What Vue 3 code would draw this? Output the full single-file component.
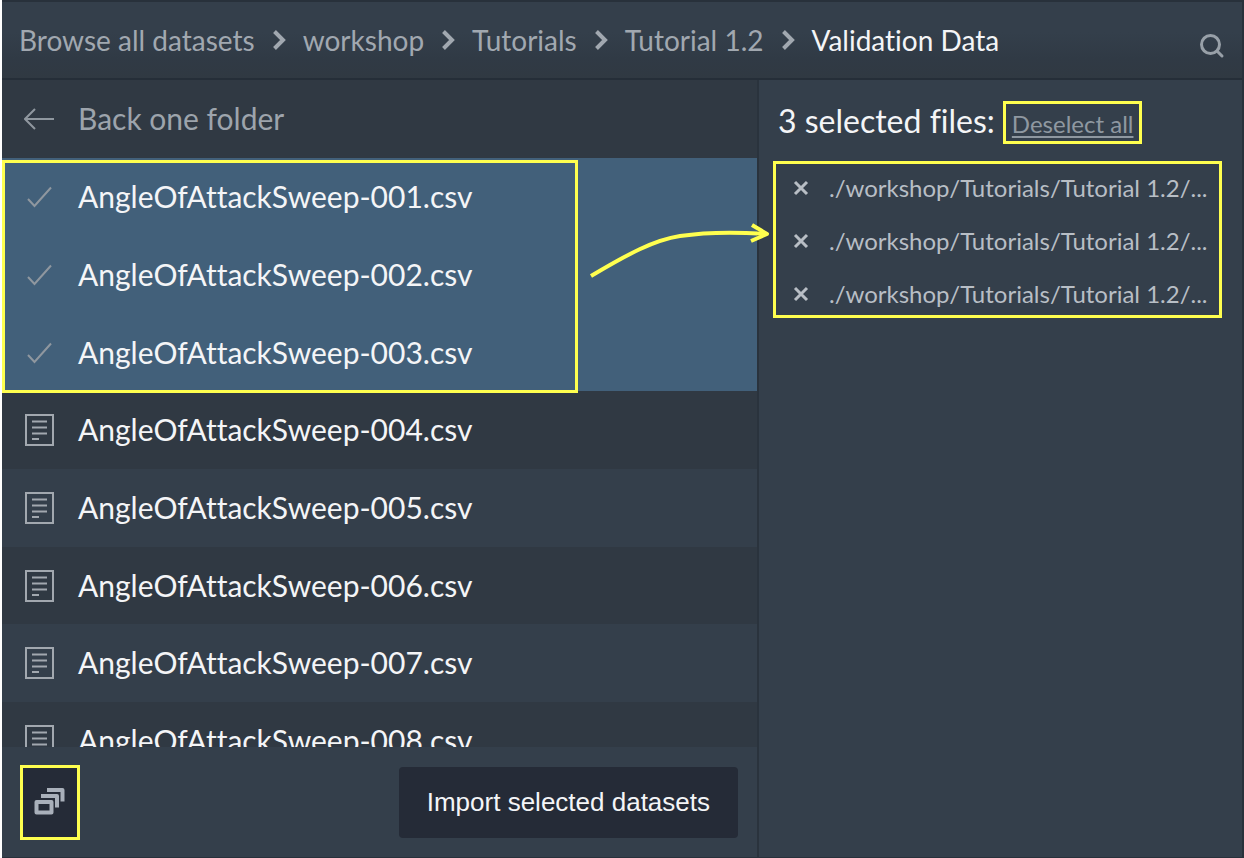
<script setup>
import { ref, computed } from 'vue'

const crumbs = ['Browse all datasets', 'workshop', 'Tutorials', 'Tutorial 1.2', 'Validation Data']
const files = ref(
  ['001', '002', '003', '004', '005', '006', '007', '008'].map((n, i) => ({
    name: `AngleOfAttackSweep-${n}.csv`,
    selected: i < 3,
  }))
)
const selected = computed(() => files.value.filter((f) => f.selected))
const deselectAll = () => files.value.forEach((f) => (f.selected = false))
</script>

<template>
  <div class="browser">
    <header class="header">
      <nav class="crumbs" aria-label="Breadcrumb">
        <template v-for="(crumb, i) in crumbs" :key="crumb">
          <svg v-if="i" class="chevron" viewBox="0 0 14 22" aria-hidden="true">
            <path d="M2.500 2.500 L11 11 L2.500 19.500" />
          </svg>
          <a href="#" class="crumb" :class="{ current: i === crumbs.length - 1 }">{{ crumb }}</a>
        </template>
      </nav>
      <button class="search" type="button" aria-label="Search">
        <svg viewBox="0 0 26 26" aria-hidden="true">
          <circle cx="11.500" cy="11.500" r="9" />
          <path d="M18.500 18.500 L23 23" />
        </svg>
      </button>
    </header>

    <main class="main">
      <section class="files">
        <button class="row back" type="button">
          <svg class="icon" viewBox="0 0 32 32" aria-hidden="true">
            <path class="thin" d="M30 16 H1 M11 6 L1 16 L11 26" />
          </svg>
          <span>Back one folder</span>
        </button>
        <ul class="list">
          <li v-for="file in files" :key="file.name">
            <button
              class="row"
              :class="{ selected: file.selected }"
              type="button"
              :aria-pressed="file.selected"
              @click="file.selected = !file.selected"
            >
              <svg v-if="file.selected" class="icon" viewBox="0 0 32 32" aria-hidden="true">
                <path class="thin" d="M4 18 L10.500 25 L27 6.500" />
              </svg>
              <svg v-else class="icon" viewBox="0 0 32 32" aria-hidden="true">
                <path d="M2 1 H29 V31 H2 Z M8 7.500 H23 M8 13.500 H23 M8 19.500 H23 M8 25 H15" />
              </svg>
              <span>{{ file.name }}</span>
            </button>
          </li>
        </ul>
        <footer class="footer">
          <button class="stack marked" type="button" aria-label="Import as group">
            <svg viewBox="0 0 32 28" aria-hidden="true">
              <path d="M2.500 14 H17.500 V24.500 H2.500 Z" />
              <path d="M7 8 H23 V19.500" />
              <path d="M13 2 H28.500 V13.500" />
            </svg>
          </button>
          <button class="import" type="button">Import selected datasets</button>
        </footer>
        <div class="callout"></div>
      </section>

      <aside class="side">
        <div class="summary">
          <h2>{{ selected.length }} selected files:</h2>
          <button class="deselect marked" type="button" @click="deselectAll">Deselect all</button>
        </div>
        <ul class="paths marked">
          <li v-for="file in selected" :key="file.name">
            <button type="button" :aria-label="`Remove ${file.name}`" @click="file.selected = false">
              <svg viewBox="0 0 16 16" aria-hidden="true">
                <path d="M2 2 L14 14 M14 2 L2 14" />
              </svg>
            </button>
            <span>./workshop/Tutorials/Tutorial 1.2/...</span>
          </li>
        </ul>
      </aside>

      <svg class="arrow" viewBox="0 0 184 64" aria-hidden="true">
        <path d="M3 56 C40 34 66 20 92 16 S150 12 179 14" />
        <path d="M164 5 L179 14 L163 21" />
      </svg>
    </main>
  </div>
</template>

<style>
body {
  background: #fff;
}
</style>

<style scoped>
* {
  box-sizing: border-box;
}

.browser {
  display: flex;
  flex-direction: column;
  height: 100vh;
  margin-left: 2px;
  overflow: hidden;
  border: solid #28313b;
  border-width: 2px 2px 1px 0;
  background: #343f4b;
  color: #f4f5f7;
  font-family: Lato, "Liberation Sans", sans-serif;
  font-size: 30px;
  font-variant-ligatures: none;
}

button {
  margin: 0;
  padding: 0;
  border: 0;
  background: none;
  color: inherit;
  font: inherit;
  font-variant-ligatures: none;
  text-align: left;
  cursor: pointer;
}

svg {
  display: block;
  fill: none;
  stroke: currentColor;
}

ul {
  margin: 0;
  padding: 0;
  list-style: none;
}

.marked {
  border: 3px solid #ffff4f;
}

.header {
  display: flex;
  flex: none;
  align-items: center;
  justify-content: space-between;
  height: 78px;
  padding: 0 17px;
  border-bottom: 2px solid #252e38;
  background: linear-gradient(#343f4b 40%, #303a45 75%, #303942);
}

.crumbs {
  display: flex;
  align-items: center;
  gap: 17px;
  color: #a1a8b0;
  font-size: 28px;
  white-space: nowrap;
}

.crumb {
  color: inherit;
  text-decoration: none;
}

.crumb.current {
  color: #f4f5f7;
}

.chevron {
  width: 14px;
  height: 22px;
  stroke-width: 4;
}

.search {
  margin-top: 12px;
  color: #98a0a8;
}

.search svg {
  width: 26px;
  height: 26px;
  stroke-width: 3;
  stroke-linecap: round;
}

.main {
  position: relative;
  display: grid;
  grid-template-columns: 757fr 483fr;
  flex: 1;
  min-height: 0;
}

.files {
  position: relative;
  display: flex;
  flex-direction: column;
  min-height: 0;
  border-right: 2px solid #2a333d;
}

.row {
  display: flex;
  align-items: center;
  gap: 22px;
  width: 100%;
  height: 100%;
  padding: 0 22px;
}

.row span {
  padding-bottom: 2px;
}

.row.back {
  flex: none;
  height: 78px;
  background: #303943;
  color: #9da4ac;
}

.icon {
  flex: none;
  width: 32px;
  height: 32px;
  color: #a2a8af;
  stroke-width: 2;
}

.thin {
  stroke: #8f979f;
}

.list {
  flex: 1;
  min-height: 0;
  overflow: hidden;
}

.list li {
  height: 78px;
}

.list li:nth-child(3n) {
  height: 77px;
}

.list li:nth-child(even) {
  background: #303943;
}

.row.selected {
  background: #42607a;
}

.footer {
  display: flex;
  flex: none;
  align-items: center;
  justify-content: space-between;
  height: 110px;
  padding: 0 19px 0 18px;
}

.stack {
  display: grid;
  place-items: center;
  width: 60px;
  height: 75px;
  background: #252b37;
  color: #a9b0ba;
}

.stack svg {
  width: 32px;
  height: 28px;
  stroke-width: 4;
  stroke-linejoin: round;
}

.import {
  padding: 20px 28px;
  border-radius: 4px;
  background: #252b37;
  font-family: "Liberation Sans", sans-serif;
  font-size: 26px;
  line-height: 31px;
}

.callout {
  position: absolute;
  top: 80px;
  left: 0;
  width: 576px;
  height: 233px;
  border: 3px solid #ffff4f;
}

.side {
  min-width: 0;
  padding: 21px 20px 0 14px;
}

.summary {
  display: flex;
  align-items: baseline;
  gap: 8px;
  padding-left: 5px;
  white-space: nowrap;
}

h2 {
  margin: 0;
  font-size: 32px;
  font-weight: 400;
  line-height: 37px;
}

.deselect {
  padding: 2px 6px 0;
  color: #8f98a1;
  font-size: 24px;
  line-height: 35px;
  text-decoration: underline 2px;
  text-underline-offset: 3px;
}

.paths {
  display: grid;
  gap: 25px;
  margin-top: 17px;
  padding: 10px 0 7px 17px;
  color: #b8bec5;
  font-size: 24px;
  line-height: 28px;
}

.paths li {
  display: flex;
  align-items: center;
  gap: 20px;
  white-space: nowrap;
}

.paths svg {
  width: 16px;
  height: 16px;
  stroke-width: 3;
}

.arrow {
  position: absolute;
  top: 140px;
  left: 586px;
  width: 184px;
  height: 64px;
  stroke: #ffff4f;
  stroke-width: 4;
  stroke-linejoin: round;
}
</style>
